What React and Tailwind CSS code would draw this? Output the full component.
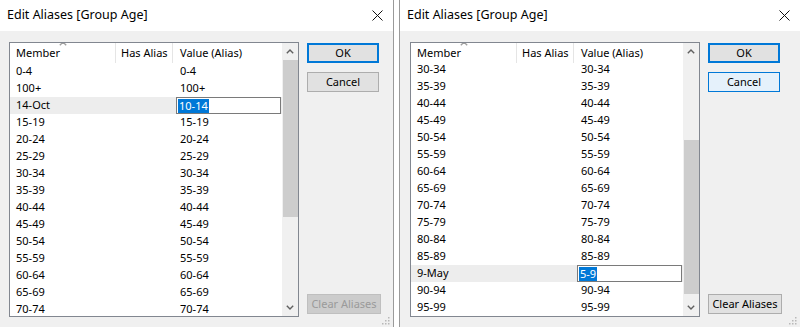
const leftRows = [
  ["0-4", "0-4"],
  ["100+", "100+"],
  ["14-Oct", "10-14", true],
  ["15-19", "15-19"],
  ["20-24", "20-24"],
  ["25-29", "25-29"],
  ["30-34", "30-34"],
  ["35-39", "35-39"],
  ["40-44", "40-44"],
  ["45-49", "45-49"],
  ["50-54", "50-54"],
  ["55-59", "55-59"],
  ["60-64", "60-64"],
  ["65-69", "65-69"],
  ["70-74", "70-74"],
];

const rightRows = [
  ["30-34", "30-34"],
  ["35-39", "35-39"],
  ["40-44", "40-44"],
  ["45-49", "45-49"],
  ["50-54", "50-54"],
  ["55-59", "55-59"],
  ["60-64", "60-64"],
  ["65-69", "65-69"],
  ["70-74", "70-74"],
  ["75-79", "75-79"],
  ["80-84", "80-84"],
  ["85-89", "85-89"],
  ["9-May", "5-9", true],
  ["90-94", "90-94"],
  ["95-99", "95-99"],
];

const CloseIcon = () => (
  <svg width="11" height="11" viewBox="0 0 11 11">
    <path d="M0.5 0.5 L10.5 10.5 M10.5 0.5 L0.5 10.5" stroke="#111" strokeWidth="1" />
  </svg>
);

const Chevron = ({ up, color = "#606060" }) => (
  <svg width="8" height="5" viewBox="0 0 8 5">
    <path
      d={up ? "M0.8 4.3 L4 1.1 L7.2 4.3" : "M0.8 0.7 L4 3.9 L7.2 0.7"}
      stroke={color}
      strokeWidth="1.4"
      fill="none"
    />
  </svg>
);

const Gripper = () => (
  <svg width="8" height="8" viewBox="0 0 8 8">
    <rect x="6" y="0" width="1.5" height="1.5" fill="#b8b8b8" />
    <rect x="3" y="3" width="1.5" height="1.5" fill="#b8b8b8" />
    <rect x="6" y="3" width="1.5" height="1.5" fill="#b8b8b8" />
    <rect x="0" y="6" width="1.5" height="1.5" fill="#b8b8b8" />
    <rect x="3" y="6" width="1.5" height="1.5" fill="#b8b8b8" />
    <rect x="6" y="6" width="1.5" height="1.5" fill="#b8b8b8" />
  </svg>
);

const Row = ({ member, value, editing }) => (
  <div className={`flex h-[17px] items-center ${editing ? "bg-[#ededed]" : ""}`}>
    <div className="w-[106px] pl-[6px] shrink-0">{member}</div>
    <div className="w-[57px] shrink-0" />
    {editing ? (
      <div className="ml-[3px] flex h-[17px] w-[105px] items-center border border-[#7a7a7a] bg-white pl-[1px]">
        <span className="bg-[#0078d7] px-[1px] leading-[14px] text-white">{value}</span>
      </div>
    ) : (
      <div className="pl-[7px]">{value}</div>
    )}
  </div>
);

const Dialog = ({ rows, thumbTop, thumbHeight, rowsOffset, cancelHover, clearEnabled, listLeft }) => (
  <div className="flex h-[327px] flex-col bg-[#f0f0f0]">
    <div className="flex h-[31px] shrink-0 items-center justify-between bg-white pl-[7px] pr-[10px]">
      <span className="text-[12.5px] text-black">Edit Aliases [Group Age]</span>
      <CloseIcon />
    </div>
    <div className={`flex flex-1 pt-[11px] ${listLeft}`}>
      <div className="flex h-[275px] w-[290px] border border-[#828790] bg-white">
        <div className="flex flex-1 flex-col overflow-hidden text-[11px] text-black">
          <div className="relative z-10 flex h-[20px] shrink-0 items-center bg-white">
            <div className="absolute left-[49px] top-[-2px]">
              <Chevron up color="#a0a0a0" />
            </div>
            <div className="flex h-full w-[106px] items-center border-r border-[#e5e5e5] pl-[6px]">Member</div>
            <div className="flex h-full w-[57px] items-center border-r border-[#e5e5e5] pl-[5px]">Has Alias</div>
            <div className="pl-[7px]">Value (Alias)</div>
          </div>
          <div className={rowsOffset}>
            {rows.map(([m, v, e]) => (
              <Row key={m} member={m} value={v} editing={e} />
            ))}
          </div>
        </div>
        <div className="flex w-[16px] shrink-0 flex-col bg-[#f0f0f0]">
          <div className="flex h-[17px] items-center justify-center">
            <Chevron up />
          </div>
          <div className="relative flex-1">
            <div className={`absolute left-[1px] right-0 bg-[#cdcdcd] ${thumbTop} ${thumbHeight}`} />
          </div>
          <div className="flex h-[17px] items-center justify-center">
            <Chevron />
          </div>
        </div>
      </div>
      <div className="ml-[8px] flex h-[275px] flex-col pt-[1px] text-[11px]">
        <button className="h-[20px] w-[72px] border-2 border-[#0078d7] bg-[#e1e1e1] text-black">OK</button>
        <button
          className={`mt-[9px] h-[20px] w-[72px] border text-black ${
            cancelHover ? "border-[#0078d7] bg-[#e5f1fb]" : "border-[#adadad] bg-[#e1e1e1]"
          }`}
        >
          Cancel
        </button>
        <div className="flex-1" />
        {clearEnabled ? (
          <button className="mb-[3px] h-[20px] w-[74px] border border-[#adadad] bg-[#e1e1e1] text-black">
            Clear Aliases
          </button>
        ) : (
          <button className="mb-[3px] h-[20px] w-[74px] border border-[#bfbfbf] bg-[#cccccc] text-[#9a9a9a]">
            Clear Aliases
          </button>
        )}
      </div>
      <div className="flex-1" />
      <div className="flex items-end pb-[2px] pr-[3px]">
        <Gripper />
      </div>
    </div>
  </div>
);

export default function App() {
  return (
    <div
      className="flex h-[327px] w-[800px] overflow-hidden bg-white"
      style={{ fontFamily: '"Noto Sans", "Open Sans", sans-serif' }}
    >
      <div className="w-[394px] shrink-0 border-r border-[#9a9a9a]">
        <Dialog
          rows={leftRows}
          thumbTop="top-0"
          thumbHeight="h-[157px]"
          rowsOffset=""
          listLeft="pl-[9px]"
        />
      </div>
      <div className="w-[5px] shrink-0 bg-white" />
      <div className="flex-1 border-l border-[#9a9a9a]">
        <Dialog
          rows={rightRows}
          thumbTop="top-[80px]"
          thumbHeight="h-[154px]"
          rowsOffset="mt-[-2px]"
          cancelHover
          clearEnabled
          listLeft="pl-[10px]"
        />
      </div>
    </div>
  );
}
